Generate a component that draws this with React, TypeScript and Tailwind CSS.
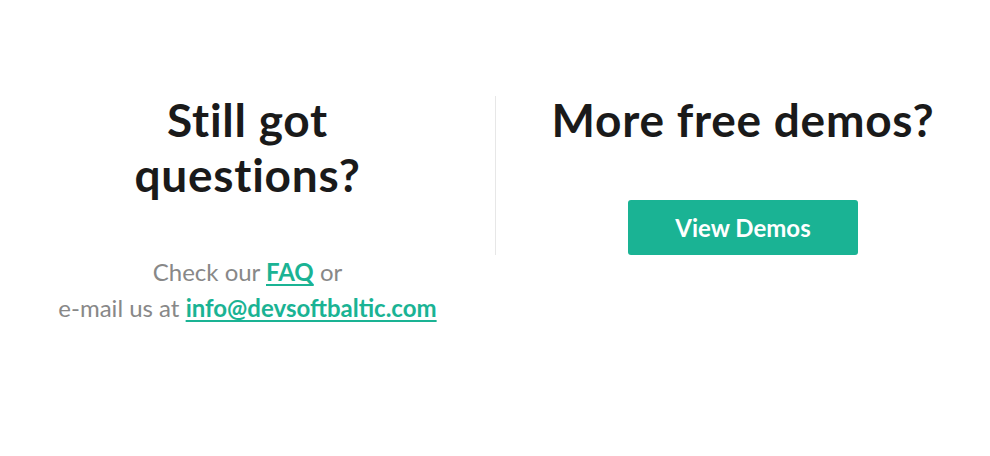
import React from "react";

const FONT = "font-['Lato','Liberation_Sans',sans-serif]";

const Questions: React.FC = () => (
  <div className="flex w-[495px] flex-col items-center text-center">
    <h2 className="w-[300px] text-[46px] leading-[1.2] font-bold tracking-[0.75px] text-[#1a1a1a]">
      Still got questions?
    </h2>
    <p className="mt-[52px] text-[24px] leading-[1.5] text-[#888888]">
      Check our{" "}
      <a href="#" className="font-bold text-[#1ab394] underline underline-offset-[3px]">
        FAQ
      </a>{" "}
      or
      <br />
      e-mail us at{" "}
      <a href="#" className="font-bold text-[#1ab394] underline underline-offset-[3px]">
        info@devsoftbaltic.com
      </a>
    </p>
  </div>
);

const Demos: React.FC = () => (
  <div className="flex flex-1 flex-col items-center text-center">
    <h2 className="text-[46px] leading-[1.2] font-bold tracking-[0.75px] text-[#1a1a1a]">
      More free demos?
    </h2>
    <button className="mt-[53px] flex h-[55px] w-[230px] items-center justify-center rounded-[3px] bg-[#1ab394] text-[24px] font-bold text-white">
      View Demos
    </button>
  </div>
);

export default function App() {
  return (
    <div className={`${FONT} flex h-[456px] w-full bg-white pt-[92px]`}>
      <Questions />
      <div className="mt-1 h-[159px] w-px bg-[#e7e7e7]" />
      <Demos />
    </div>
  );
}
